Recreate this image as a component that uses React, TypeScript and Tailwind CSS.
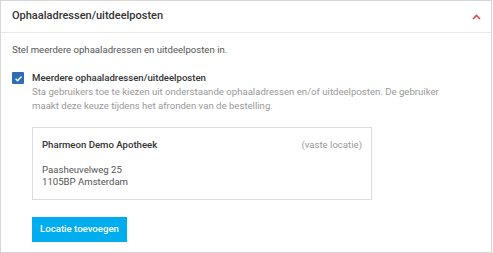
import React from 'react';

export default function App() {
  return (
    <div className="w-[492px] h-[253px] bg-white border border-[#d6d6d6] font-['Roboto',sans-serif] text-[9.6px]">
      {/* Header */}
      <div className="h-[32px] flex items-center justify-between pl-[11px] pr-[10px] border-b border-[#e6e6e6]">
        <span className="text-[11px] font-medium text-[#333]">Ophaaladressen/uitdeelposten</span>
        <svg className="w-[9px] h-[6px]" viewBox="0 0 9 6" fill="none" stroke="#e8474c" strokeWidth="1.6">
          <path d="M1 5l3.5-3.5L8 5" />
        </svg>
      </div>

      {/* Body */}
      <div className="pl-[11px] pt-[10px]">
        <p className="text-[#555] leading-[14px]">Stel meerdere ophaaladressen en uitdeelposten in.</p>

        <div className="flex mt-[14px]">
          <div className="w-[12px] h-[12px] mt-[1px] bg-[#2f6db5] rounded-[1px] flex items-center justify-center">
            <svg className="w-[9px] h-[9px]" viewBox="0 0 10 10" fill="none" stroke="white" strokeWidth="1.6">
              <path d="M1.8 5.2l2.2 2.2 4.3-4.6" />
            </svg>
          </div>
          <div className="ml-[8px]">
            <div className="font-medium text-[#333] leading-[14px]">Meerdere ophaaladressen/uitdeelposten</div>
            <div className="text-[#999] leading-[14px]">
              Sta gebruikers toe te kiezen uit onderstaande ophaaladressen en/of uitdeelposten. De gebruiker
              <br />
              maakt deze keuze tijdens het afronden van de bestelling.
            </div>

            <div className="mt-[14px] w-[340px] h-[73px] border border-[#dcdcdc] px-[9px] pt-[10px]">
              <div className="flex justify-between leading-[14px]">
                <span className="font-medium text-[#333]">Pharmeon Demo Apotheek</span>
                <span className="text-[#999]">(vaste locatie)</span>
              </div>
              <div className="mt-[12px] text-[#555] leading-[12px]">
                <div>Paasheuvelweg 25</div>
                <div>1105BP Amsterdam</div>
              </div>
            </div>

            <button className="block mt-[17px] h-[25px] w-[95px] bg-[#00adef] text-white font-medium text-[9.6px]">
              Locatie toevoegen
            </button>
          </div>
        </div>
      </div>
    </div>
  );
}
